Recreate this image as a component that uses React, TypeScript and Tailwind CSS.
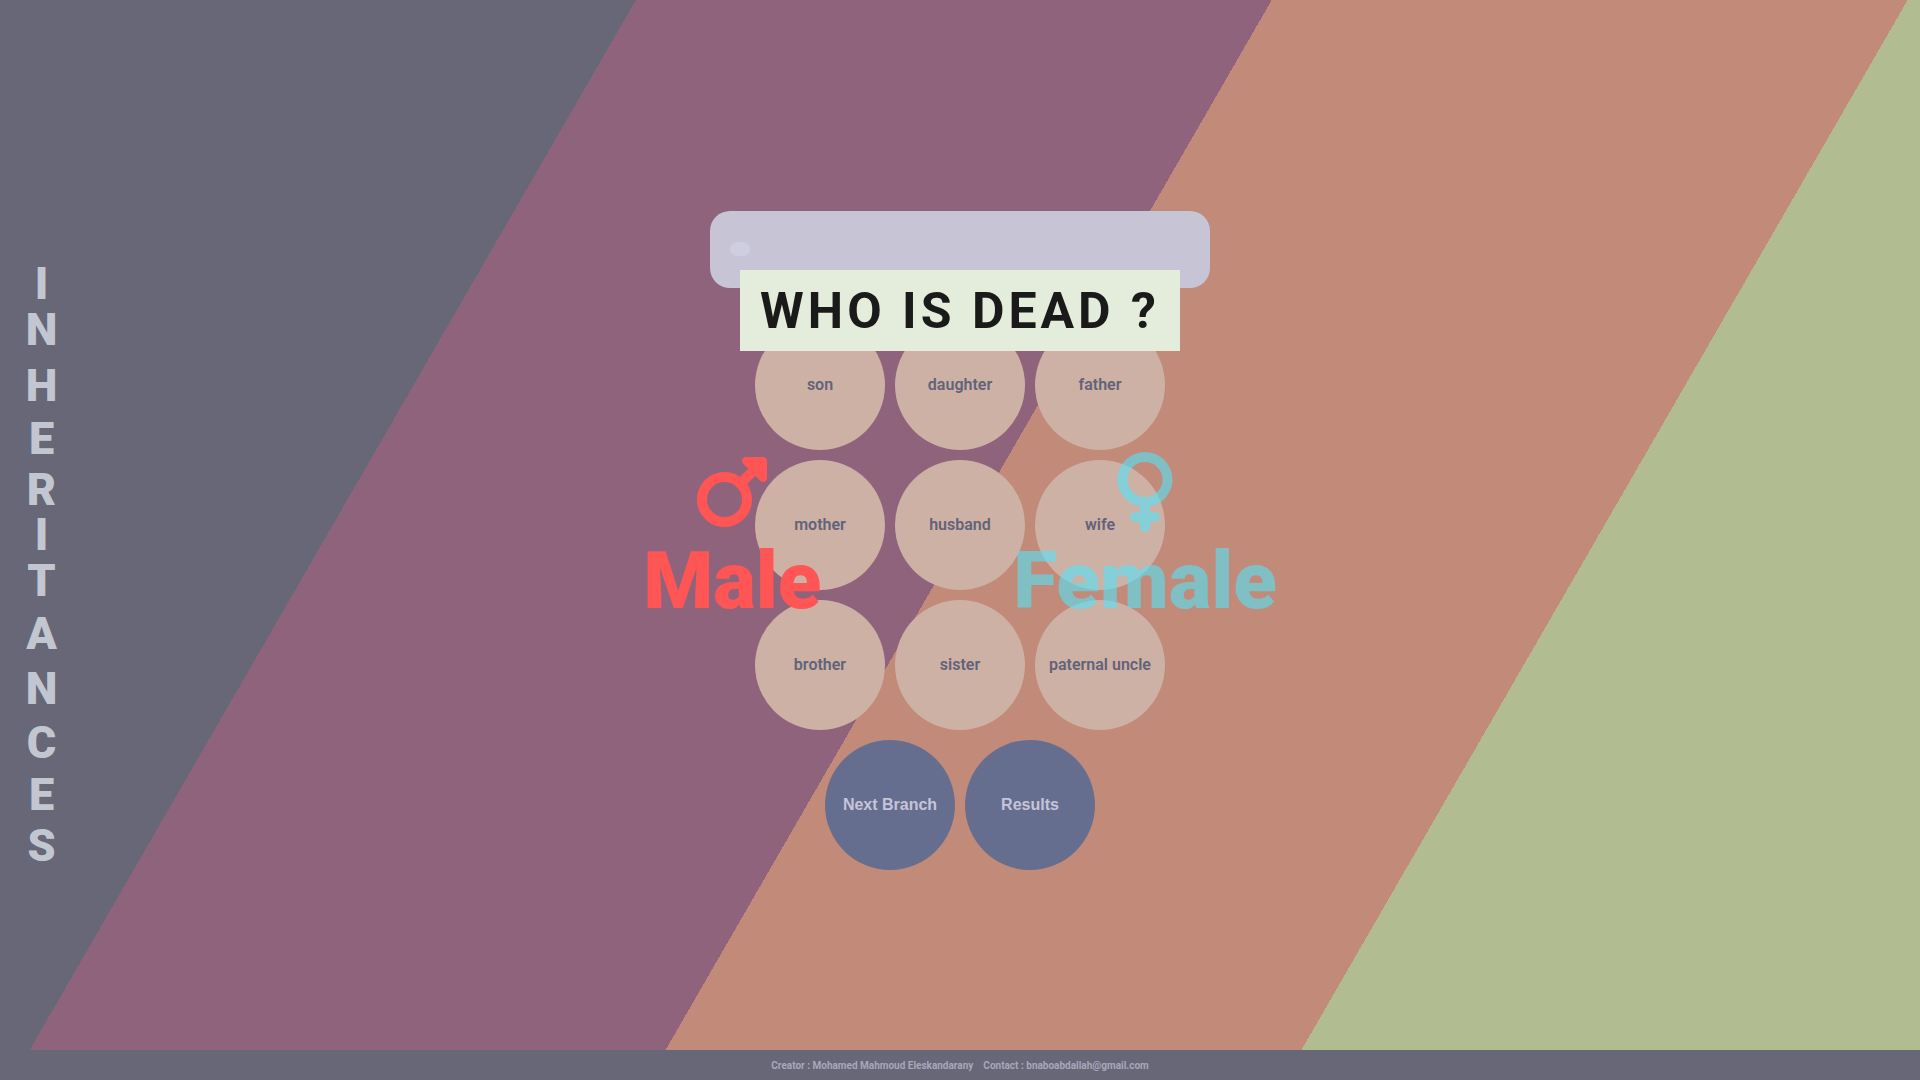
import { FaMars, FaVenus } from "react-icons/fa6";

const relatives = [
  "son",
  "daughter",
  "father",
  "mother",
  "husband",
  "wife",
  "brother",
  "sister",
  "paternal uncle",
];

const actions = ["Next Branch", "Results"];

function SideTitle() {
  return (
    <header className="absolute inset-y-0 left-0 flex w-[82px] items-center justify-center pt-14">
      <h1
        aria-label="Inheritances"
        className="flex items-center gap-6 text-[45px] leading-none font-black text-[#c2c6d0] [writing-mode:vertical-rl]"
      >
        {"INHERITANCES".split("").map((letter, index) => (
          <span key={index} className="-rotate-90">
            {letter}
          </span>
        ))}
      </h1>
    </header>
  );
}

function Board() {
  return (
    <main className="flex flex-1 flex-col items-center justify-center gap-8 pt-[30px]">
      <div className="flex h-[77px] w-[500px] items-center rounded-[20px] bg-[#c6c4d5] px-5">
        <span className="h-[14px] w-5 rounded-[7px] bg-[#cfcde0]" />
      </div>
      <div className="flex w-[430px] flex-wrap justify-center gap-[10px]">
        {relatives.map((name) => (
          <button
            key={name}
            type="button"
            className="size-[130px] rounded-full bg-[#cdb1a5] text-base font-semibold text-[#626378]"
          >
            {name}
          </button>
        ))}
        {actions.map((name) => (
          <button
            key={name}
            type="button"
            className="size-[130px] rounded-full bg-[#666e8f] font-['Liberation_Sans',sans-serif] text-base font-bold text-[#c6c4d9]"
          >
            {name}
          </button>
        ))}
      </div>
    </main>
  );
}

function GenderPrompt() {
  return (
    <section className="absolute inset-x-0 top-1/4 flex flex-col items-center gap-[101px]">
      <h2 className="flex h-[81px] w-[440px] items-center justify-center bg-[#e4ecdb] text-[50px] leading-none font-bold tracking-[4px] whitespace-nowrap text-[#1a1a1a]">
        WHO IS DEAD ?
      </h2>
      <div className="flex gap-48 text-[80px] leading-[94px] font-black">
        <button type="button" className="flex flex-col items-center gap-0.5 text-[#ff5555]">
          <FaMars />
          Male
        </button>
        <button type="button" className="flex flex-col items-center gap-0.5 text-[#4fe7ff] opacity-[.57]">
          <FaVenus />
          Female
        </button>
      </div>
    </section>
  );
}

export default function App() {
  return (
    <div className="relative flex min-h-screen flex-col bg-[linear-gradient(120deg,#676778_25%,#90637c_25%_50%,#c28a78_50%_75%,#b1bc91_75%)] font-[Roboto,sans-serif]">
      <SideTitle />
      <Board />
      <GenderPrompt />
      <footer className="flex h-[30px] items-center justify-center gap-[10px] bg-[#676778] text-[10px] font-bold text-[#aaa6bb]">
        <span>Creator : Mohamed Mahmoud Eleskandarany</span>
        <span>Contact : bnaboabdallah@gmail.com</span>
      </footer>
    </div>
  );
}
